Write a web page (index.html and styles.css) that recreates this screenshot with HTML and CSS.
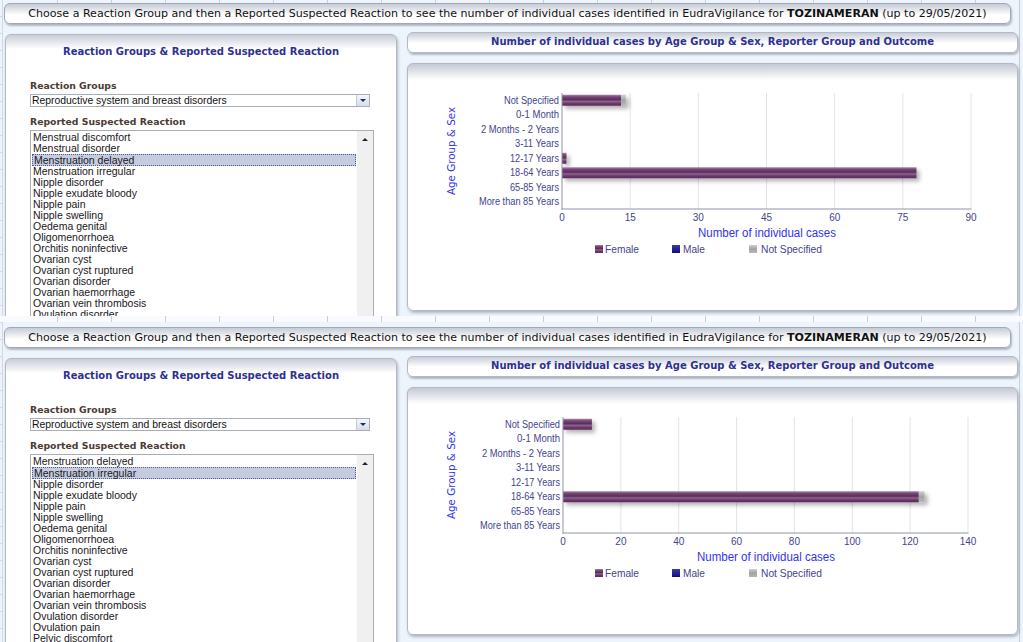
FILE: index.html
```html
<!DOCTYPE html>
<html>
<head>
<meta charset="utf-8">
<title>EudraVigilance - TOZINAMERAN</title>
<link rel="stylesheet" href="styles.css">
</head>
<body>
<div class="page">
  <svg class="defs" width="0" height="0" aria-hidden="true">
    <defs>
      <linearGradient id="fem" x1="0" y1="0" x2="0" y2="1">
        <stop offset="0" stop-color="#a58aa5"/>
        <stop offset="0.2" stop-color="#754575"/>
        <stop offset="0.45" stop-color="#5d2c5d"/>
        <stop offset="0.6" stop-color="#8a648a"/>
        <stop offset="0.8" stop-color="#6a386a"/>
        <stop offset="1" stop-color="#5a2a5a"/>
      </linearGradient>
      <linearGradient id="ns" x1="0" y1="0" x2="0" y2="1">
        <stop offset="0" stop-color="#d0d0d0"/>
        <stop offset="0.5" stop-color="#a2a2a2"/>
        <stop offset="1" stop-color="#b8b8b8"/>
      </linearGradient>
      <linearGradient id="male" x1="0" y1="0" x2="0" y2="1">
        <stop offset="0" stop-color="#3a3aa8"/>
        <stop offset="1" stop-color="#10107a"/>
      </linearGradient>
      <filter id="sh" x="-5%" y="-50%" width="115%" height="250%">
        <feDropShadow dx="3" dy="3" stdDeviation="2" flood-color="#000" flood-opacity="0.3"/>
      </filter>
    </defs>
  </svg>

  <!-- Screen 1 -->
  <div class="screen first">
    <div class="ticks"></div>
    <div class="hdr">Choose a Reaction Group and then a Reported Suspected Reaction to see the number of individual cases identified in EudraVigilance for <b>TOZINAMERAN</b> (up to 29/05/2021)</div>
    <div class="main">
      <div class="left">
        <div class="ptitle">Reaction Groups &amp; Reported Suspected Reaction</div>
        <div class="lbl first-lbl">Reaction Groups</div>
        <div class="select"><span class="stext">Reproductive system and breast disorders</span><span class="sbtn"><span class="darr"></span></span></div>
        <div class="lbl second-lbl">Reported Suspected Reaction</div>
        <div class="listbox">
          <div class="items">
            <div class="it">Menstrual discomfort</div>
            <div class="it">Menstrual disorder</div>
            <div class="it sel">Menstruation delayed</div>
            <div class="it">Menstruation irregular</div>
            <div class="it">Nipple disorder</div>
            <div class="it">Nipple exudate bloody</div>
            <div class="it">Nipple pain</div>
            <div class="it">Nipple swelling</div>
            <div class="it">Oedema genital</div>
            <div class="it">Oligomenorrhoea</div>
            <div class="it">Orchitis noninfective</div>
            <div class="it">Ovarian cyst</div>
            <div class="it">Ovarian cyst ruptured</div>
            <div class="it">Ovarian disorder</div>
            <div class="it">Ovarian haemorrhage</div>
            <div class="it">Ovarian vein thrombosis</div>
            <div class="it">Ovulation disorder</div>
          </div>
          <div class="sbar"><span class="uarr"></span></div>
        </div>
      </div>
      <div class="right">
        <div class="ctitle">Number of individual cases by Age Group &amp; Sex, Reporter Group and Outcome</div>
        <div class="cpanel">
          <svg class="chart" width="609" height="246" viewBox="1 1 609 246">
            <g class="grid">
              <line x1="223.2" y1="30" x2="223.2" y2="146"/>
              <line x1="291.3" y1="30" x2="291.3" y2="146"/>
              <line x1="359.5" y1="30" x2="359.5" y2="146"/>
              <line x1="427.7" y1="30" x2="427.7" y2="146"/>
              <line x1="495.8" y1="30" x2="495.8" y2="146"/>
              <line x1="564" y1="30" x2="564" y2="146"/>
            </g>
            <g class="bars" filter="url(#sh)">
              <rect x="155" y="31.75" width="59.1" height="11" fill="url(#fem)"/>
              <rect x="214.1" y="31.75" width="4.6" height="11" fill="url(#ns)"/>
              <rect x="155" y="89.75" width="4.5" height="11" fill="url(#fem)"/>
              <rect x="155" y="104.25" width="354.5" height="11" fill="url(#fem)"/>
            </g>
            <g class="axis">
              <line x1="155" y1="30" x2="155" y2="146.5"/>
              <line x1="154.5" y1="146" x2="564.5" y2="146"/>
            </g>
            <g class="cat">
              <text x="152" y="40.5" textLength="55" lengthAdjust="spacingAndGlyphs">Not Specified</text>
              <text x="152" y="55" textLength="43" lengthAdjust="spacingAndGlyphs">0-1 Month</text>
              <text x="152" y="69.5" textLength="78" lengthAdjust="spacingAndGlyphs">2 Months - 2 Years</text>
              <text x="152" y="84" textLength="44" lengthAdjust="spacingAndGlyphs">3-11 Years</text>
              <text x="152" y="98.5" textLength="49" lengthAdjust="spacingAndGlyphs">12-17 Years</text>
              <text x="152" y="113" textLength="49" lengthAdjust="spacingAndGlyphs">18-64 Years</text>
              <text x="152" y="127.5" textLength="49" lengthAdjust="spacingAndGlyphs">65-85 Years</text>
              <text x="152" y="142" textLength="80" lengthAdjust="spacingAndGlyphs">More than 85 Years</text>
            </g>
            <g class="tick">
              <text x="155" y="158">0</text>
              <text x="223.2" y="158">15</text>
              <text x="291.3" y="158">30</text>
              <text x="359.5" y="158">45</text>
              <text x="427.7" y="158">60</text>
              <text x="495.8" y="158">75</text>
              <text x="564" y="158">90</text>
            </g>
            <text class="xtitle" x="360" y="174" textLength="138" lengthAdjust="spacingAndGlyphs">Number of individual cases</text>
            <text class="ytitle" transform="translate(48,88) rotate(-90)" textLength="88" lengthAdjust="spacingAndGlyphs">Age Group &amp; Sex</text>
            <g class="legend">
              <rect x="188" y="182" width="8" height="8" fill="url(#fem)"/>
              <text x="198" y="190" textLength="34" lengthAdjust="spacingAndGlyphs">Female</text>
              <rect x="265" y="182" width="8" height="8" fill="url(#male)"/>
              <text x="276" y="190" textLength="22" lengthAdjust="spacingAndGlyphs">Male</text>
              <rect x="342" y="182" width="8" height="8" fill="url(#ns)"/>
              <text x="354" y="190" textLength="61" lengthAdjust="spacingAndGlyphs">Not Specified</text>
            </g>
          </svg>
        </div>
      </div>
    </div>
  </div>

  <!-- Screen 2 -->
  <div class="screen second">
    <div class="ticks"></div>
    <div class="hdr">Choose a Reaction Group and then a Reported Suspected Reaction to see the number of individual cases identified in EudraVigilance for <b>TOZINAMERAN</b> (up to 29/05/2021)</div>
    <div class="main">
      <div class="left">
        <div class="ptitle">Reaction Groups &amp; Reported Suspected Reaction</div>
        <div class="lbl first-lbl">Reaction Groups</div>
        <div class="select"><span class="stext">Reproductive system and breast disorders</span><span class="sbtn"><span class="darr"></span></span></div>
        <div class="lbl second-lbl">Reported Suspected Reaction</div>
        <div class="listbox">
          <div class="items">
            <div class="it">Menstruation delayed</div>
            <div class="it sel">Menstruation irregular</div>
            <div class="it">Nipple disorder</div>
            <div class="it">Nipple exudate bloody</div>
            <div class="it">Nipple pain</div>
            <div class="it">Nipple swelling</div>
            <div class="it">Oedema genital</div>
            <div class="it">Oligomenorrhoea</div>
            <div class="it">Orchitis noninfective</div>
            <div class="it">Ovarian cyst</div>
            <div class="it">Ovarian cyst ruptured</div>
            <div class="it">Ovarian disorder</div>
            <div class="it">Ovarian haemorrhage</div>
            <div class="it">Ovarian vein thrombosis</div>
            <div class="it">Ovulation disorder</div>
            <div class="it">Ovulation pain</div>
            <div class="it">Pelvic discomfort</div>
          </div>
          <div class="sbar"><span class="uarr"></span></div>
        </div>
      </div>
      <div class="right">
        <div class="ctitle">Number of individual cases by Age Group &amp; Sex, Reporter Group and Outcome</div>
        <div class="cpanel">
          <svg class="chart" width="609" height="246" viewBox="1 1 609 246">
            <g class="grid">
              <line x1="213.9" y1="30" x2="213.9" y2="146"/>
              <line x1="271.7" y1="30" x2="271.7" y2="146"/>
              <line x1="329.6" y1="30" x2="329.6" y2="146"/>
              <line x1="387.4" y1="30" x2="387.4" y2="146"/>
              <line x1="445.3" y1="30" x2="445.3" y2="146"/>
              <line x1="503.1" y1="30" x2="503.1" y2="146"/>
              <line x1="561" y1="30" x2="561" y2="146"/>
            </g>
            <g class="bars" filter="url(#sh)">
              <rect x="156" y="31.75" width="28.9" height="11" fill="url(#fem)"/>
              <rect x="156" y="104.25" width="355.8" height="11" fill="url(#fem)"/>
              <rect x="511.8" y="104.25" width="5.8" height="11" fill="url(#ns)"/>
            </g>
            <g class="axis">
              <line x1="156" y1="30" x2="156" y2="146.5"/>
              <line x1="155.5" y1="146" x2="561.5" y2="146"/>
            </g>
            <g class="cat">
              <text x="153" y="40.5" textLength="55" lengthAdjust="spacingAndGlyphs">Not Specified</text>
              <text x="153" y="55" textLength="43" lengthAdjust="spacingAndGlyphs">0-1 Month</text>
              <text x="153" y="69.5" textLength="78" lengthAdjust="spacingAndGlyphs">2 Months - 2 Years</text>
              <text x="153" y="84" textLength="44" lengthAdjust="spacingAndGlyphs">3-11 Years</text>
              <text x="153" y="98.5" textLength="49" lengthAdjust="spacingAndGlyphs">12-17 Years</text>
              <text x="153" y="113" textLength="49" lengthAdjust="spacingAndGlyphs">18-64 Years</text>
              <text x="153" y="127.5" textLength="49" lengthAdjust="spacingAndGlyphs">65-85 Years</text>
              <text x="153" y="142" textLength="80" lengthAdjust="spacingAndGlyphs">More than 85 Years</text>
            </g>
            <g class="tick">
              <text x="156" y="158">0</text>
              <text x="213.9" y="158">20</text>
              <text x="271.7" y="158">40</text>
              <text x="329.6" y="158">60</text>
              <text x="387.4" y="158">80</text>
              <text x="445.3" y="158">100</text>
              <text x="503.1" y="158">120</text>
              <text x="561" y="158">140</text>
            </g>
            <text class="xtitle" x="359" y="174" textLength="138" lengthAdjust="spacingAndGlyphs">Number of individual cases</text>
            <text class="ytitle" transform="translate(48,88) rotate(-90)" textLength="88" lengthAdjust="spacingAndGlyphs">Age Group &amp; Sex</text>
            <g class="legend">
              <rect x="188" y="182" width="8" height="8" fill="url(#fem)"/>
              <text x="198" y="190" textLength="34" lengthAdjust="spacingAndGlyphs">Female</text>
              <rect x="265" y="182" width="8" height="8" fill="url(#male)"/>
              <text x="276" y="190" textLength="22" lengthAdjust="spacingAndGlyphs">Male</text>
              <rect x="342" y="182" width="8" height="8" fill="url(#ns)"/>
              <text x="354" y="190" textLength="61" lengthAdjust="spacingAndGlyphs">Not Specified</text>
            </g>
          </svg>
        </div>
      </div>
    </div>
  </div>
</div>
</body>
</html>
```
FILE: styles.css
```css
html, body {
  margin: 0;
  padding: 0;
}
body {
  width: 1023px;
  height: 642px;
  overflow: hidden;
  background-color: #eef4fb;
  background-image:
    repeating-linear-gradient(to right, transparent 0 53px, #c9ced8 53px 54px),
    linear-gradient(to right, transparent 0 2px, #d3d9e3 2px 3px, transparent 3px),
    repeating-linear-gradient(to bottom, transparent 0 16px, #d3d9e3 16px 17px),
    linear-gradient(to right, transparent 0 1019px, #c9ced8 1019px 1020px, transparent 1020px);
  background-size: 1023px 3px, 4px 642px, 3px 642px, 1023px 642px;
  background-position: 4px 0, 0 0, 0 0, 0 0;
  background-repeat: no-repeat;
  font-family: "DejaVu Sans", Verdana, sans-serif;
}
.page {
  width: 1023px;
}
.defs {
  position: absolute;
}
.screen {
  height: 324px;
  overflow: hidden;
}
.screen.first {
  margin-top: -8px;
}
.screen.second {
  height: 330px;
}
.ticks {
  height: 6px;
  background-color: #f8fafd;
  background-image: repeating-linear-gradient(to right, transparent 0 53px, #c9ced8 53px 54px);
  background-position: 4px 0;
}
.hdr {
  box-sizing: border-box;
  margin: 5px 0 0 4px;
  width: 1007px;
  height: 21px;
  border: 1px solid #a3a8b3;
  border-radius: 6px;
  background: linear-gradient(#c6cbd6, #ffffff 11px);
  box-shadow: 1px 2px 2px rgba(60, 70, 90, 0.35);
  font-size: 11.05px;
  line-height: 19px;
  text-align: center;
  color: #111;
  white-space: nowrap;
}
.hdr b {
  font-weight: bold;
}
.main {
  display: flex;
  gap: 10px;
  padding-left: 5px;
  margin-top: 8px;
}
.left {
  box-sizing: border-box;
  width: 392px;
  height: 420px;
  margin-top: 2px;
  padding: 0 24px;
  border: 1px solid #b3b8c3;
  border-radius: 6px;
  background: linear-gradient(#c8cdd8, #ffffff 14px);
  box-shadow: 1px 2px 3px rgba(60, 70, 90, 0.35);
}
.ptitle {
  padding-top: 9px;
  height: 25px;
  line-height: 15px;
  text-align: center;
  font-weight: bold;
  font-size: 10px;
  color: #2e3192;
  white-space: nowrap;
}
.lbl {
  font-weight: bold;
  font-size: 9.3px;
  line-height: 12px;
  color: #4a3b33;
  white-space: nowrap;
}
.first-lbl {
  margin-top: 11px;
}
.second-lbl {
  margin-top: 9px;
}
.select {
  box-sizing: border-box;
  margin-top: 2px;
  width: 340px;
  height: 13px;
  border: 1px solid #a8adb6;
  background: #fff;
  display: flex;
  align-items: stretch;
}
.stext {
  flex: 1;
  padding-left: 1px;
  font-family: "Liberation Sans", Arial, sans-serif;
  font-size: 10.4px;
  line-height: 11px;
  color: #111;
  white-space: nowrap;
}
.sbtn {
  width: 12px;
  border-left: 1px solid #c3cad6;
  background: linear-gradient(#f4f7fb, #d5dde9);
  display: flex;
  align-items: center;
  justify-content: center;
}
.darr {
  width: 0;
  height: 0;
  border-left: 3px solid transparent;
  border-right: 3px solid transparent;
  border-top: 3px solid #1c2c6c;
}
.listbox {
  box-sizing: border-box;
  margin-top: 2px;
  width: 344px;
  height: 300px;
  padding-top: 1px;
  border: 1px solid #a8adb6;
  background: #fff;
  display: flex;
}
.items {
  flex: 1;
  padding: 0 1px 0 1px;
  font-family: "Liberation Sans", Arial, sans-serif;
  font-size: 10.5px;
  color: #1a1622;
}
.it {
  height: 11px;
  line-height: 11px;
  padding-left: 1px;
  white-space: nowrap;
}
.it.sel {
  box-sizing: border-box;
  height: 12px;
  line-height: 10px;
  background: #c6cce0;
  border: 1px dotted #4a5a9a;
  padding-left: 1px;
}
.sbar {
  width: 16px;
  margin-top: -1px;
  background: #f0f0f0;
  display: flex;
  justify-content: center;
  align-items: flex-start;
  padding-top: 7px;
  box-sizing: border-box;
}
.uarr {
  width: 0;
  height: 0;
  border-left: 3px solid transparent;
  border-right: 3px solid transparent;
  border-bottom: 3px solid #222;
}
.right {
  width: 611px;
  display: flex;
  flex-direction: column;
  gap: 10px;
}
.ctitle {
  box-sizing: border-box;
  height: 21px;
  border: 1px solid #b3b8c3;
  border-radius: 6px;
  background: linear-gradient(#c8cdd8, #ffffff 10px);
  box-shadow: 1px 2px 2px rgba(60, 70, 90, 0.35);
  text-align: center;
  font-weight: bold;
  font-size: 10px;
  line-height: 18px;
  color: #2e3192;
  white-space: nowrap;
}
.cpanel {
  box-sizing: border-box;
  height: 248px;
  border: 1px solid #b3b8c3;
  border-radius: 6px;
  background: linear-gradient(#c4c9d5, #ffffff 16px);
  box-shadow: 1px 2px 3px rgba(60, 70, 90, 0.35);
}
.chart {
  display: block;
}
.chart .grid line {
  stroke: #e2e3ea;
  stroke-width: 1;
}
.chart .axis line {
  stroke: #8e90b0;
  stroke-width: 1;
}
.chart text {
  font-family: "Liberation Sans", Arial, sans-serif;
}
.chart .cat text {
  font-size: 10px;
  fill: #45448e;
  text-anchor: end;
}
.chart .tick text {
  font-size: 10px;
  fill: #45448e;
  text-anchor: middle;
}
.chart .xtitle {
  font-size: 12px;
  fill: #3333ee;
  text-anchor: middle;
}
.chart .ytitle {
  font-family: "DejaVu Sans", Verdana, sans-serif;
  font-size: 10.5px;
  fill: #3333ee;
  text-anchor: middle;
}
.chart .legend text {
  font-size: 11px;
  fill: #45448e;
}
```
